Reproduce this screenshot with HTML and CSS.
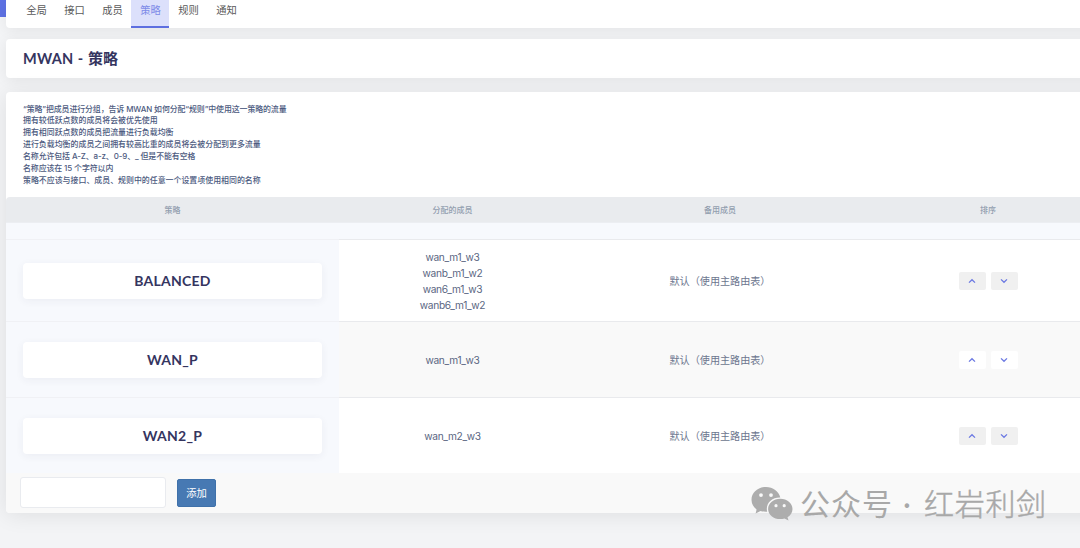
FILE: index.html
```html
<!DOCTYPE html>
<html lang="zh-CN">
<head>
  <meta charset="UTF-8">
  <title>MWAN - 策略</title>
  <link rel="stylesheet" href="styles.css">
</head>
<body>
  <div class="sidebar-edge"></div>
  <main class="main">
    <nav class="tabs">
      <a class="tab">全局</a>
      <a class="tab">接口</a>
      <a class="tab">成员</a>
      <a class="tab active">策略</a>
      <a class="tab">规则</a>
      <a class="tab">通知</a>
    </nav>

    <h2 class="title"><span class="latin">MWAN - </span>策略</h2>

    <section class="card">
      <div class="descr">
        <div class="line tight">“策略”把成员进行分组，告诉 MWAN 如何分配“规则”中使用这一策略的流量</div>
        <div class="line">拥有较低跃点数的成员将会被优先使用</div>
        <div class="line">拥有相同跃点数的成员把流量进行负载均衡</div>
        <div class="line">进行负载均衡的成员之间拥有较高比重的成员将会被分配到更多流量</div>
        <div class="line tight">名称允许包括 A-Z、a-z、0-9、_ 但是不能有空格</div>
        <div class="line tight">名称应该在 15 个字符以内</div>
        <div class="line">策略不应该与接口、成员、规则中的任意一个设置项使用相同的名称</div>
      </div>

      <div class="row head">
        <div>策略</div>
        <div>分配的成员</div>
        <div>备用成员</div>
        <div>排序</div>
      </div>
      <div class="row blank"></div>

      <div class="row tall">
        <div class="name-cell"><h3 class="name">BALANCED</h3></div>
        <div class="members"><span>wan_m1_w3</span><span>wanb_m1_w2</span><span>wan6_m1_w3</span><span>wanb6_m1_w2</span></div>
        <div class="fallback">默认（使用主路由表）</div>
        <div class="sort">
          <button class="btn-sort"><svg width="8" height="6" viewBox="0 0 8 6"><path d="M1 4.6 4 1.7 7 4.6"/></svg></button>
          <button class="btn-sort"><svg width="8" height="6" viewBox="0 0 8 6"><path d="M1 1.4 4 4.3 7 1.4"/></svg></button>
        </div>
      </div>

      <div class="row odd">
        <div class="name-cell"><h3 class="name">WAN_P</h3></div>
        <div class="members"><span>wan_m1_w3</span></div>
        <div class="fallback">默认（使用主路由表）</div>
        <div class="sort">
          <button class="btn-sort"><svg width="8" height="6" viewBox="0 0 8 6"><path d="M1 4.6 4 1.7 7 4.6"/></svg></button>
          <button class="btn-sort"><svg width="8" height="6" viewBox="0 0 8 6"><path d="M1 1.4 4 4.3 7 1.4"/></svg></button>
        </div>
      </div>

      <div class="row">
        <div class="name-cell"><h3 class="name">WAN2_P</h3></div>
        <div class="members"><span>wan_m2_w3</span></div>
        <div class="fallback">默认（使用主路由表）</div>
        <div class="sort">
          <button class="btn-sort"><svg width="8" height="6" viewBox="0 0 8 6"><path d="M1 4.6 4 1.7 7 4.6"/></svg></button>
          <button class="btn-sort"><svg width="8" height="6" viewBox="0 0 8 6"><path d="M1 1.4 4 4.3 7 1.4"/></svg></button>
        </div>
      </div>

      <div class="create">
        <input class="create-name" type="text">
        <button class="btn-add">添加</button>
      </div>
    </section>
  </main>

  <div class="watermark">
    <svg class="wechat" width="42" height="35" viewBox="0 0 42 35">
      <path fill-rule="evenodd" d="M15 1C7 1 .5 6.600 .5 13.800c0 4 2 7.400 5.100 9.700L4.600 27.400l4.900-2.500c1.700.5 3.500.8 5.500.8h1.200c-.3-1-.4-1.900-.4-2.900 0-6.500 5.900-11.300 12.700-11.300h.8C27.800 5.500 22 1 15 1ZM10 7.200a1.900 1.900 0 1 1 0 3.800 1.900 1.900 0 0 1 0-3.800ZM20 7.200a1.900 1.900 0 1 1 0 3.800 1.900 1.900 0 0 1 0-3.800Z"/>
      <path fill-rule="evenodd" d="M29.300 12.700c-6.700 0-12.200 4.500-12.200 10.200s5.500 10.200 12.200 10.200c1.500 0 2.900-.2 4.200-.6l4 2-1-3.200c3-1.900 5-5 5-8.400 0-5.700-5.500-10.200-12.200-10.200ZM25 18.100a1.600 1.600 0 1 1 0 3.200 1.600 1.600 0 0 1 0-3.200ZM33.200 18.100a1.600 1.600 0 1 1 0 3.200 1.600 1.600 0 0 1 0-3.200Z"/>
    </svg>
    <span class="wm-label">公众号</span>
    <span class="wm-dot">·</span>
    <span class="wm-name">红岩利剑</span>
  </div>
</body>
</html>
```
FILE: styles.css
```css
* {
  box-sizing: border-box;
}

body {
  margin: 0;
  width: 1080px;
  height: 548px;
  overflow: hidden;
  display: flex;
  align-items: flex-start;
  background: #f3f4f6;
  color: #5a6682;
  font-family: Inter, "Noto Sans CJK SC", sans-serif;
  font-size: 10px;
}

.sidebar-edge {
  flex: none;
  width: 6px;
  height: 17px;
  background: #5e72e4;
}

/* runs past the right edge of the window */
.main {
  flex: none;
  width: 1100px;
}

.tabs {
  display: flex;
  height: 28px;
  padding-left: 11px;
  background: #fff;
  border-radius: 0 0 4px 4px;
  box-shadow: 0 2px 14px rgba(0, 0, 0, .07);
}

.tab {
  width: 38px;
  height: 28px;
  padding-left: 1px;
  line-height: 20px;
  text-align: center;
  font-size: 10.3px;
  color: #5a5a5a;
}

.tab.active {
  color: #7e8be8;
  background: #dce0fb;
  border-bottom: 2px solid #5e6fe0;
}

.title {
  height: 39px;
  margin: 11px 0 14px;
  padding-left: 17px;
  line-height: 38px;
  font-family: Lato, "Noto Sans CJK SC", sans-serif;
  font-size: 15px;
  font-weight: 700;
  color: #35355f;
  background: #fff;
  border-radius: 4px;
  box-shadow: 0 2px 14px rgba(0, 0, 0, .07);
}

.title .latin {
  font-size: 14.5px;
  letter-spacing: .2px;
  word-spacing: .8px;
}

.card {
  height: 421px;
  background: #fff;
  border-radius: 4px;
  box-shadow: 0 2px 22px rgba(0, 0, 0, .09);
}

.descr {
  height: 105px;
  padding: 11.6px 17px 0;
  font-size: 7.93px;
  font-weight: 500;
  color: #4c5a80;
}

.line {
  height: 11.9px;
  line-height: 11.9px;
  white-space: nowrap;
}

.line.tight {
  letter-spacing: -.1px;
}

.row {
  display: grid;
  grid-template-columns: 333px 227px 308px 228px;
  height: 76px;
  border-top: 1px solid #e9eaed;
  background: #fff;
}

.row > div {
  display: flex;
  align-items: center;
  justify-content: center;
  padding-bottom: 1px;
}

.row.tall {
  height: 82px;
}

.row.odd {
  background: #f9f9f9;
}

.row.head {
  height: 25px;
  border: none;
  border-radius: 4px 0 0 0;
  background: #e9ebee;
  font-size: 8px;
  font-weight: 500;
  color: #929eae;
}

.row.blank {
  height: 17px;
  background: #f7f9fd;
  border-color: #eceef2;
}

/* covers the row's darker top border in the first column */
.row .name-cell {
  margin-top: -1px;
  padding: 0 17px;
  border-top: 1px solid #f0f1f5;
  background: #f7f9fd;
}

.name {
  width: 100%;
  height: 36px;
  margin: 0;
  line-height: 35px;
  text-align: center;
  font-family: Lato, sans-serif;
  font-size: 14px;
  font-weight: 700;
  letter-spacing: .25px;
  color: #35355f;
  background: #fff;
  border-radius: 4px;
  box-shadow: 0 2px 8px rgba(50, 50, 93, .06);
}

.row .members {
  padding-bottom: 0;
  flex-direction: column;
  font-size: 10.2px;
  line-height: 16px;
  letter-spacing: -.33px;
}

.row .fallback {
  padding-bottom: 1px;
  font-size: 10.1px;
  color: #6c768e;
}

.row .sort {
  padding: 1px 0 0;
  gap: 5px;
}

.btn-sort {
  display: flex;
  align-items: center;
  justify-content: center;
  width: 27px;
  height: 18px;
  padding: 0;
  border: none;
  border-radius: 2px;
  background: #f0f0f0;
}

.odd .btn-sort {
  background: #fff;
}

.btn-sort path {
  fill: none;
  stroke: #6a78e2;
  stroke-width: 1.3;
}

.create {
  display: flex;
  height: 40px;
  padding: 4px 14px 0;
  gap: 11px;
  background: #f9f9f9;
  border-radius: 0 0 4px 4px;
}

.create-name {
  width: 146px;
  height: 31px;
  border: 1px solid #e9ebef;
  border-radius: 3px;
  background: #fff;
}

.btn-add {
  width: 39px;
  height: 28px;
  margin-top: 2px;
  padding: 0 0 2px;
  border: 1px solid #3f71aa;
  border-radius: 2px;
  background: #4779b3;
  color: #fff;
  font-family: "Noto Sans CJK SC", sans-serif;
  font-size: 10.3px;
}

.watermark {
  position: absolute;
  left: 751px;
  top: 486px;
  display: flex;
  height: 36px;
  line-height: 33px;
  white-space: nowrap;
  font-family: "Noto Sans CJK SC", sans-serif;
  font-size: 30px;
  color: #a8a8a8;
}

.wechat {
  fill: #adadad;
}

.wm-label {
  margin-left: 7px;
  letter-spacing: 1px;
}

.wm-dot {
  width: 28px;
  line-height: 34px;
  text-align: center;
  font-family: Lato, sans-serif;
}

.wm-name {
  margin-left: 3px;
  letter-spacing: .7px;
  font-weight: 300;
  -webkit-text-stroke: .45px #a8a8a8;
}
```
